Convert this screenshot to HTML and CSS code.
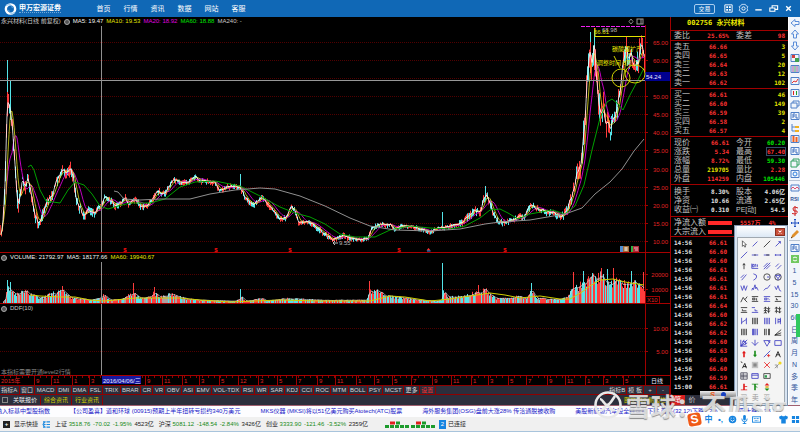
FILE: index.html
```html
<!DOCTYPE html>
<html lang="zh-CN">
<head>
<meta charset="utf-8">
<meta name="viewport" content="width=device-width, initial-scale=1">
<title>永兴材料 002756</title>
<link rel="stylesheet" href="styles.css">
</head>
<body>
<header class="topbar">
  <a class="brand" href="#">
    <svg class="brand-mark" viewBox="0 0 14 14" aria-hidden="true"><circle cx="7" cy="7" r="5" fill="none" stroke="#fff" stroke-width="2.6"/><path d="M2 3Q9 1 9 6M12 11Q5 13 5 8" fill="none" stroke="#6db0e6" stroke-width="1"/></svg>
    <span class="brand-name">申万宏源证券</span>
  </a>
  <nav class="menu"><a href="#">首页</a><a href="#">行情</a><a href="#">资讯</a><a href="#">数据</a><a href="#">网站</a><a href="#">客服</a></nav>
  <div class="window-tools">
    <button class="trade">交易</button>
    <button aria-label="布局"><svg viewBox="0 0 12 12"><path d="M2 2h8v8H2z" fill="none" stroke="#fff"/><path d="M3.500 3.500h2v2h-2zM6.500 3.500h2v2h-2zM3.500 6.500h2v2h-2zM6.500 6.500h2v2h-2z" fill="#fff"/></svg></button>
    <button aria-label="设置"><svg viewBox="0 0 12 12"><path d="M4 1.500h4l.8 1.500 1.900.8-.7 2.200.7 2.200-1.900.8L8 10.500H4L3.200 9l-1.900-.8L2 6l-.7-2.200L3.200 3z" fill="none" stroke="#d8eaff" stroke-width=".9"/><circle cx="6" cy="6" r="1.800" fill="none" stroke="#fff"/></svg></button>
    <button aria-label="最小化"><svg viewBox="0 0 12 12"><path d="M2.500 7.500h7" stroke="#fff" stroke-width="1.500"/></svg></button>
    <button aria-label="还原"><svg viewBox="0 0 12 12"><path d="M4.500 5V3h6v4H8M2 5.500h5.500v3.500H2z" fill="none" stroke="#fff" stroke-width="1.200"/></svg></button>
    <button aria-label="关闭"><svg viewBox="0 0 12 12"><path d="M3.500 3.500l5 5m0-5l-5 5" stroke="#fff" stroke-width="1.500"/></svg></button>
  </div>
</header>

<main class="workspace">
  <div class="charts">
    <section class="panel price-panel">
      <div class="legend">
        <span>永兴材料(日线 前复权)</span><i class="dot"></i><span class="w">MA5: 19.47</span><span class="y">MA10: 19.53</span><span class="m">MA20: 18.92</span><span class="g">MA60: 18.88</span><span>MA240: -</span>
      </div>
      <svg id="price" class="plot" viewBox="0 17 670 236" preserveAspectRatio="xMaxYMid meet" role="img" aria-label="日线价格"></svg>
    </section>
    <section class="panel volume-panel">
      <div class="legend"><i class="dot"></i><span class="w">VOLUME: 21792.97</span><span class="w">MA5: 18177.66</span><span class="y">MA60: 19940.67</span></div>
      <svg id="volume" class="plot" viewBox="0 253 670 51" preserveAspectRatio="xMaxYMid meet" role="img" aria-label="成交量"></svg>
    </section>
    <section class="panel ddf-panel">
      <div class="legend"><i class="dot"></i><span>DDF(10)</span></div>
      <svg id="ddf" class="plot" viewBox="0 304 670 72" preserveAspectRatio="xMaxYMid meet" role="img" aria-label="DDF"></svg>
    </section>
    <svg id="timeline" class="timeline" viewBox="0 376 670 9" preserveAspectRatio="xMaxYMid meet" role="img" aria-label="日期轴"></svg>
    <div class="tabs"><div class="tab-list" id="tabs"></div><button class="push">指标B</button><button>模 板</button><button class="sign">+</button><button class="sign">-</button></div>
    <div class="links">
      <button class="fold" aria-label="收起"></button><a class="on" href="#">关联报价</a><a href="#">综合资讯</a><a href="#">行业资讯</a>
      <span class="links-end">图文F10 侧边栏</span>
    </div>
  </div>

  <aside class="quote">
    <h1>002756 永兴材料</h1>
    <table class="stats ratio"><tr><th>委比</th><td class="r">25.65%</td><th>委差</th><td class="r">98</td></tr></table>
    <table class="book">
      <tr><th>卖五</th><td>66.66</td><td>3</td></tr><tr><th>卖四</th><td>66.65</td><td>5</td></tr><tr><th>卖三</th><td>66.64</td><td>20</td></tr><tr><th>卖二</th><td>66.63</td><td>12</td></tr><tr><th>卖一</th><td>66.62</td><td>102</td></tr>
    </table>
    <table class="book">
      <tr><th>买一</th><td>66.61</td><td>46</td></tr><tr><th>买二</th><td>66.60</td><td>149</td></tr><tr><th>买三</th><td>66.59</td><td>39</td></tr><tr><th>买四</th><td>66.58</td><td>2</td></tr><tr><th>买五</th><td>66.57</td><td>4</td></tr>
    </table>
    <table class="stats">
      <tr><th>现价</th><td class="r">66.61</td><th>今开</th><td class="g">60.20</td></tr>
      <tr><th>涨跌</th><td class="r">5.34</td><th>最高</th><td class="r"><span class="boxed">67.40</span></td></tr>
      <tr><th>涨幅</th><td class="r">8.72%</td><th>最低</th><td class="g">59.30</td></tr>
      <tr><th>总量</th><td class="y">219705</td><th>量比</th><td class="r">2.28</td></tr>
      <tr><th>外盘</th><td class="r">114259</td><th>内盘</th><td class="g">105446</td></tr>
    </table>
    <table class="stats roomy">
      <tr><th>换手</th><td>8.30%</td><th>股本</th><td>4.06亿</td></tr>
      <tr><th>净资</th><td>10.66</td><th>流通</th><td>2.65亿</td></tr>
      <tr><th>收益㈠</th><td>0.310</td><th class="latin">PE[动]</th><td>54.5</td></tr>
    </table>
    <div class="flow">
      <div><span>净流入额</span><i></i><b>5557万</b><b>4%</b></div>
      <div><span>大宗流入</span><i></i></div>
    </div>
    <table class="ticks" id="ticks"></table>
    <div class="quote-tabs"><button class="hot">笔</button><button>价</button></div>
  </aside>

  <div class="side-tools" id="side"></div>

  <div class="palette" role="dialog" aria-label="画线工具">
    <div class="palette-bar"><button aria-label="关闭画线工具"><svg viewBox="0 0 10 8"><path d="M3 2l4 4m0-4L3 6" stroke="#fff" stroke-width="1.400"/></svg></button></div>
    <div class="palette-grid" id="palette"></div>
  </div>
</main>

<div class="ticker">
  <a href="#">纳入标基中型股指数</a><a href="#">【公司盈喜】道和环球 (00915)预期上半年扭转亏损约340万美元</a><a href="#">MKS仪器 (MKSI)将以51亿美元购买Atotech(ATC)股票</a><a href="#">海外服务集团(OSG)盘前大涨28% 传洽通脱被收购</a><a href="#">美股新能源汽车股全线盘前下跌 蔚来(32.12)下跌1.2%</a><a href="#">盛 大跌 1.38</a>
</div>

<footer class="status">
  <button class="plus" aria-label="添加">+</button><span>显示快捷</span>
  <svg class="list-ico" viewBox="0 0 10 8" aria-hidden="true"><path d="M1 1h3M2 4h2M1 7h3M5 1h4M5 4h4M5 7h4M3 1L1 4l2 3" fill="none" stroke="#1d8be0" stroke-width="1.200"/></svg>
  <p>上证 <b>3518.76</b> <b>-70.02</b> <b>-1.95%</b> 4523亿</p>
  <p>沪深 <b>5081.12</b> <b>-148.54</b> <b>-2.84%</b> 3426亿</p>
  <p>创业 <b>3333.90</b> <b>-121.46</b> <b>-3.52%</b> 2359亿</p>
  <svg class="heat" viewBox="0 0 50 8" aria-hidden="true"><path d="M0 6.500h24M26 6.500h24" stroke="#1c9b2c" stroke-width="3" stroke-dasharray="4 1"/><path d="M5 3h5M31 3h5" stroke="#e02020" stroke-width="3"/><path d="M11 3h4M37 3h4" stroke="#1c9b2c" stroke-width="3"/></svg>
  <span class="count">2</span><span>已连接</span>
</footer>

<div class="watermark" aria-hidden="true">
  <svg viewBox="0 0 30 30"><circle cx="15" cy="15" r="12.500" fill="none" stroke="#e9e9e9" stroke-width="2.600"/><path d="M7 9c3 0 4 6 7 6s5-5 8-9M7 21c3 0 4-5 8-6 2 4 4 6 7 5" fill="none" stroke="#e9e9e9" stroke-width="2.600"/></svg>
  <span>雪球：不瓜sig</span>
</div>
<div class="mini-bar"><i>S</i><em></em></div>
<div class="ime">
  <span class="ime-logo">S</span>
  <button>中</button>
  <button aria-label="标点">•,</button>
  <button aria-label="表情"><svg viewBox="0 0 10 10"><circle cx="5" cy="5" r="4.200" fill="#1684e0"/><path d="M2.800 5.500q2.200 3 4.400 0M3 3.500h1M6 3.500h1" fill="none" stroke="#fff"/></svg></button>
  <button aria-label="语音"><svg viewBox="0 0 10 10"><rect x="3.500" y="0" width="3" height="6" rx="1.500" fill="#1684e0"/><path d="M2 4q0 3.500 3 3.500T8 4M5 7.500V10M3 9.500h4" fill="none" stroke="#1684e0"/></svg></button>
  <button aria-label="键盘"><svg viewBox="0 0 10 10"><rect x=".5" y="2" width="9" height="6" fill="none" stroke="#1684e0"/><path d="M2 4h6M3 6.300h4" stroke="#1684e0" stroke-dasharray="1.200 .5"/></svg></button>
  <button class="skin" aria-label="皮肤"><svg viewBox="0 0 10 10"><path d="M0 2l3-1.500q2 2 4 0L10 2 9 5 7.500 4.500V9.500h-5v-5L1 5z" fill="#1684e0"/></svg></button>
  <button aria-label="工具箱"><svg viewBox="0 0 10 10"><path d="M1 1h3.500v3.500H1zM5.500 1H9v3.500H5.500zM1 5.500h3.500V9H1zM5.500 5.500H9V9H5.500z" fill="#1684e0"/></svg></button>
</div>
<script src="app.js"></script>
</body>
</html>
```
FILE: styles.css
```css
* { box-sizing: border-box; }
body {
  margin: 0;
  min-height: 100vh;
  display: flex;
  flex-direction: column;
  background: #000;
  color: #c8c8c8;
  font: 6px/9px "Liberation Sans", "Noto Sans CJK SC", sans-serif;
  overflow: hidden;
  border-bottom: 1px solid #a8c4dc;
}
button { font: inherit; color: inherit; background: none; border: 0; padding: 0; margin: 0; display: grid; place-items: center; }
a { color: inherit; text-decoration: none; white-space: nowrap; }
h1, p { margin: 0; }
svg { display: block; }
table { width: 100%; table-layout: fixed; }
th, td { padding: 0; font-weight: inherit; height: 9px; white-space: nowrap; }

.topbar { height: 17px; display: flex; align-items: center; background: #1068b6; color: #fff; padding: 0 6px 0 4px; }
.brand { width: 86px; display: flex; align-items: center; gap: 2px; }
.brand-mark { width: 13px; height: 14px; }
.brand-name { font-size: 7px; line-height: 8px; font-weight: 700; border-bottom: 1px dotted #6fa9dc; }
.menu { display: flex; font-size: 7px; }
.menu a { width: 27px; text-align: center; }
.window-tools { margin-left: auto; display: flex; align-items: center; gap: 4px; }
.window-tools svg { width: 11px; height: 11px; }
.window-tools .trade { width: 21px; height: 10px; border: 1px solid #a9cdef; border-radius: 2px; font-size: 6px; line-height: 8px; margin-right: 4px; }

.workspace { flex: 1; display: flex; min-height: 0; position: relative; }
.charts { flex: 1; min-width: 0; display: flex; flex-direction: column; }
.panel { position: relative; }
.price-panel { height: 236px; }
.volume-panel { height: 51px; }
.ddf-panel { height: 72px; }
.plot { width: 100%; height: 100%; }
.legend { position: absolute; top: 0; left: 1px; display: flex; align-items: center; gap: 3px; white-space: nowrap; background: #000; }
.dot { width: 6px; height: 6px; border-radius: 50%; background: #555; border: 1px solid #aaa; }
.w { color: #f0f0f0; }
.y { color: #e4e400; }
.m { color: #e000e0; }
.g { color: #00e400; }
.r { color: #ff3232; }
.timeline { width: 100%; height: 9px; }
.plot text, .timeline text { font-size: 6px; fill: #e02424; }
.plot .note { fill: #e0e000; }
.plot .plain { fill: #bbb; }
.plot .bright, .timeline .bright { fill: #e8e8ff; }
.plot .mute { fill: #888; }
.plot .mark { fill: #ff1010; font-weight: 700; }

.tabs { height: 10px; display: flex; background: #2c2e3c; border-top: 1px solid #900000; border-bottom: 1px solid #900000; color: #d8d8d8; }
.tab-list { flex: 0 0 65%; display: flex; }
.tab-list button { flex: 1 0 auto; }
.tabs button { padding: 0 1px; border-right: 1px solid #900000; line-height: 8px; white-space: nowrap; }
.tabs .set { color: #ff3030; }
.tabs .push { margin-left: auto; }
.tabs .sign { width: 13px; }
.links { flex: 1; display: flex; align-items: center; background: #2c2e3c; color: #d0d000; }
.links a { padding: 0 3px; border-right: 1px solid #900000; }
.links .on { color: #eee; }
.fold { width: 6px; height: 6px; margin: 0 2px; border: 1px solid #888; }
.links-end { margin-left: auto; padding-right: 4px; }

.quote { width: 118px; border-left: 1px solid #a00000; display: flex; flex-direction: column; font: 6px/9px "DejaVu Sans Mono", "Noto Sans CJK SC", monospace; }
.quote h1 { font-size: 7px; line-height: 13px; font-weight: 700; color: #e8e800; padding-left: 16px; height: 13px; }
.quote table { border-top: 1px solid #a00000; border-collapse: separate; border-spacing: 0; padding: 1px 0 1px 3px; }
.quote .ratio { padding: 0 0 0 3px; }
.quote .roomy { padding: 2px 0 2px 3px; }
.quote th { text-align: left; font-size: 8px; color: #c0c0c0; font-weight: 400; }
.quote .latin { font-family: "Liberation Sans", "Noto Sans CJK SC", sans-serif; font-size: 7px; }
.quote td { text-align: right; font-weight: 700; color: #e0e0e0; }
.quote td.r { color: #ff3232; }
.quote td.g { color: #00e400; }
.quote td.y { color: #e4e400; }
.stats th { width: 27px; }
.stats th:nth-child(3) { padding-left: 7px; width: 31px; }
.stats td:last-child { padding-right: 3px; }
.boxed { outline: 1px solid #334a66; }
.book th, .ticks th { width: 24px; }
.quote .book td, .quote .ticks td { width: 29px; color: #ff3232; }
.quote .book td:last-child, .quote .ticks td:last-child { width: auto; color: #e4e400; padding-right: 3px; }
.flow { border-top: 1px solid #a00000; padding: 1px 0 0 3px; font-size: 8px; height: 20px; }
.flow div { display: flex; align-items: center; gap: 2px; }
.flow span { width: 32px; white-space: nowrap; }
.flow i { width: 24px; height: 4px; background: #ff2828; }
.flow b { font-size: 6px; color: #ff3232; margin-left: 6px; }
.quote .ticks th { font-size: 6px; font-weight: 700; color: #e0e0e0; }
.quote-tabs { margin-top: auto; height: 10px; display: flex; background: #2c2e3c; font-size: 7px; }
.quote-tabs button { width: 14px; }
.quote-tabs .hot { background: #d82020; color: #fff; }

.side-tools { width: 12px; background: #f1f5fb; display: flex; flex-direction: column; justify-content: space-between; color: #30549a; border-left: 1px solid #fff; position: relative; }
.side-tools button { width: 11px; height: 11px; font-size: 7px; line-height: 11px; }
.side-tools svg { width: 10px; height: 10px; }
.side-tools .word { font-size: 5px; font-weight: 700; }
.side-tools hr { width: 100%; margin: 0; border: 0; border-top: 1px solid #b8c4d4; }
.side-tools::after { content: ""; position: absolute; right: 0; top: 297px; width: 4px; height: 23px; background: #30c860; }

.palette { position: absolute; right: 12px; top: 208px; width: 54px; height: 181px; background: #d8e4f2; border: 1px solid #8094ac; padding: 0 2px 3px; z-index: 1; }
.palette-bar { height: 11px; display: flex; justify-content: flex-end; align-items: center; background: linear-gradient(#fff, #dce8f5); }
.palette-bar button { width: 10px; height: 8px; background: #c9503a; border: 1px solid #8a3020; }
.palette-bar svg { width: 8px; height: 6px; }
.palette-grid { display: grid; grid-template-columns: repeat(4, 1fr); background: #f4f4f4; border: 1px solid #a0a8b0; }
.palette-grid button { height: 11px; font-size: 7px; line-height: 11px; color: #999; }
.palette-grid svg { width: 8px; height: 8px; }

.ticker { height: 12px; display: flex; gap: 20px; align-items: center; background: #fdfdff; color: #2020c8; overflow: hidden; border-top: 1px solid #a06070; }
.ticker a:first-child { margin-left: -4px; }
.status { height: 14px; display: flex; align-items: center; gap: 4px; padding-left: 3px; background: #f0f0f0; color: #222; white-space: nowrap; }
.status b { font-weight: 400; color: #168a16; margin-right: 1px; }
.status p { padding-right: 1px; }
.plus { width: 7px; height: 7px; background: #222; color: #fff; font-weight: 700; line-height: 7px; }
.list-ico { width: 9px; height: 7px; }
.heat { width: 50px; height: 8px; margin-left: 12px; }
.count { background: #1684e0; color: #fff; width: 7px; text-align: center; margin-right: -2px; }

.watermark { position: absolute; left: 593px; top: 390px; display: flex; align-items: center; gap: 3px; font: 700 25px/30px "Noto Sans CJK SC", sans-serif; color: rgba(235, 235, 235, .85); text-shadow: 0 1px 1px rgba(90, 90, 90, .7); white-space: nowrap; z-index: 2; }
.watermark svg { width: 30px; height: 30px; }
.mini-bar { position: absolute; left: 700px; top: 391px; width: 36px; height: 7px; background: linear-gradient(#eee, #777); display: flex; justify-content: center; align-items: center; gap: 6px; z-index: 1; }
.mini-bar i { color: #f05a18; font-size: 8px; font-weight: 700; }
.mini-bar em { width: 5px; height: 5px; border-radius: 50%; background: #1840c0; }
.ime { position: absolute; left: 688px; right: 0; top: 412px; height: 15px; display: flex; align-items: center; gap: 3px; background: #fff; color: #1684e0; font-weight: 700; z-index: 4; }
.ime button { width: 9px; font-size: 8px; }
.ime svg { width: 9px; height: 9px; }
.ime-logo { width: 13px; height: 13px; border-radius: 3px; background: #f05a18; color: #fff; font-size: 12px; line-height: 13px; text-align: center; transform: rotate(-10deg); }
.ime .skin { margin-left: auto; }
```
FILE: app.js
```js
let seed = 7;
const rnd = () => (seed = (seed * 16807) % 2147483647) / 2147483647;
const at = (pts, x) => {
  for (let i = 1; i < pts.length; i++) {
    if (x <= pts[i][0]) {
      const [a, b] = [pts[i - 1], pts[i]];
      return a[1] + (b[1] - a[1]) * (x - a[0]) / (b[0] - a[0]);
    }
  }
  return pts[pts.length - 1][1];
};
const pairs = s => s.trim().split(/\s+/).map(p => p.split(',').map(Number));
const poly = (pts, color, w = 1) => `<polyline points="${pts.map(p => p[0].toFixed(1) + ',' + p[1].toFixed(1)).join(' ')}" fill="none" stroke="${color}" stroke-width="${w}" stroke-linejoin="round"/>`;
const line = (x1, y1, x2, y2, c, extra = '') => `<path d="M${x1} ${y1}L${x2} ${y2}" stroke="${c}" ${extra}/>`;
const text = (x, y, s, cls = '', anchor = 'start') => `<text x="${x}" y="${y}" class="${cls}" text-anchor="${anchor}">${s}</text>`;
const grid = y => line(0, y, 645, y, '#500000', 'stroke-dasharray="1 1"') + line(645, y, 648, y, '#a00000');
const axis = (a, b) => line(645.5, a, 645.5, b, '#a00000') + line(101.5, a, 101.5, b, '#909090');
const base = y => line(0, y, 670, y, '#a80000');
const RED = '#ff3c3c', CYAN = '#54e4e8';

const close = pairs(`1,236 3,212 5,170 6,120 7,98 8,95 10,110 12,125 14,155 16,190 18,203 22,180 25,185 28,178 31,195 34,215 38,222 42,216 45,205 49,198 53,192 56,180 60,173 63,170 67,172 70,168 73,178 76,200 80,208 83,215 88,210 94,212 98,208 101,206 104,196 108,199 115,205 120,203 125,197 128,205 135,199 140,206 148,205 153,198 157,191 164,194 170,184 174,179 180,183 187,182 195,177 200,181 208,181 214,182 219,190 228,187 235,186 240,188 246,199 253,205 262,197 268,205 275,213 280,219 286,217 291,206 295,211 298,222 307,221 315,226 323,233 332,240 342,235 350,238 360,240 368,238 371,228 380,224 390,224 394,230 400,226 410,226 420,229 430,232 436,228 445,227 455,225 462,222 468,216 474,211 480,212 483,200 486,195 490,203 494,216 499,223 510,221 519,216 524,217 528,208 531,204 536,209 545,211 555,213 560,218 567,211 570,200 574,188 576,172 580,165 583,140 586,95 588,60 590,50 592,65 594,42 596,75 598,100 600,118 603,105 606,122 610,128 614,118 617,105 620,90 622,65 626,45 628,62 631,52 634,70 638,62 641,48 644,60`);
const amp = pairs('1,4 6,22 14,16 22,8 40,6 70,7 100,4 200,3 330,3 440,2 475,5 490,5 510,3 560,4 575,9 588,22 600,16 615,13 645,16');
const series = [];
let bars = '';
for (let x = 1; x < 645; x++) {
  const a = at(amp, x);
  const y = at(close, x) + (rnd() - .5) * a * .7;
  const up = rnd() > .48;
  const top = Math.max(30, y - rnd() * a * .9);
  const bot = y + rnd() * a * .9 + 1;
  bars += line(x + .5, top.toFixed(1), x + .5, bot.toFixed(1), up ? RED : CYAN, 'stroke-width="1"');
  series.push([x, y]);
}
const ma = (n) => series.map((p, i) => {
  const s = series.slice(Math.max(0, i - n + 1), i + 1);
  return [p[0], s.reduce((t, q) => t + q[1], 0) / s.length];
});
const ma60 = pairs('28,167 31,165 34,170 40,190 46,201 60,203 68,190 75,182 84,185 92,194 100,206 108,209 118,206 130,203 150,203 165,199 180,187 195,182 215,181 240,186 260,196 280,207 295,213 310,217 325,224 340,234 355,237 375,237 390,230 410,226 430,228 450,229 465,226 480,218 490,210 500,209 508,213 518,219 530,214 552,210 565,214 575,206 584,185 592,150 600,118 607,102 612,99 618,104 623,110 630,95 638,80 644,68');
const ma240 = pairs('114,191 118,192 124,199 140,200 160,199 190,199 210,194 235,190 260,188 275,189 300,196 325,206 350,218 370,226 395,230 430,231 460,229 485,224 500,222 530,220 565,214 582,208 595,194 610,182 622,169 634,151 644,139');

let p = '';
for (let v = 65, y = 41.5; v >= 10; v -= 5, y += 18.15) {
  p += grid(Math.round(y) + .5);
  if (v !== 55) p += text(668, Math.round(y) + 2.5, v.toFixed(2), '', 'end');
}
p += line(7.5, 60, 7.5, 100, CYAN) + line(10.5, 80, 10.5, 120, CYAN) + line(240.5, 174, 240.5, 190, CYAN) + line(442.5, 212, 442.5, 226, CYAN) + line(485.5, 186, 485.5, 200, CYAN) + line(590.5, 32, 590.5, 70, CYAN) + line(594.5, 28, 594.5, 70, RED);
p += line(0.5, 225, .5, 235, '#d02020');
p += bars + poly(ma(12).slice(5), '#c000c0', 1) + poly(ma(6), '#e0e020', .8) + poly(ma(2), '#fff', .8) + poly(ma60, '#00a000') + poly(ma240, '#909090');
p += axis(25, 253) + line(0, 80.5, 645, 80.5, '#989898') + base(252.5);
p += '<rect x="645" y="72" width="25" height="9" fill="#000090"/>' + text(646, 79, '54.24', 'bright');
p += '<path d="M581 26.500h64" stroke="#f020f0" stroke-dasharray="4 1"/>' + line(595, 36.500, 645, 36.500, '#e0e000') + line(595, 28, 595, 37, '#e0e000');
p += text(602, 32, '68.98', 'plain') + text(594, 34, '66.61', 'note');
p += text(612, 51, '碳酸锂扩产', 'note') + text(597, 65, '调整时间 8周', 'note');
p += '<g fill="none" stroke="#d0d000"><ellipse cx="621" cy="78" rx="9" ry="9"/><ellipse cx="635" cy="74" rx="10" ry="9"/><path d="M614 56l6 12"/></g>';
p += text(339, 245, '9.55', 'plain') + '<path d="M333 243h5M333 243l2-2m-2 2l2 2" fill="none" stroke="#bbb"/>';
p += '<path d="M631 19l2 2.500-2 2.500-2-2.500z" fill="none" stroke="#888"/><rect x="637" y="19" width="6" height="5" fill="none" stroke="#999"/><path d="M641 19v5" stroke="#999"/>';
[125, 216, 290, 399, 505].forEach(x => { p += text(x, 252, '$', 'mark', 'middle'); });
p += '<path d="M428.500 248l2 2.500h-4z" fill="#f33"/><path d="M427 251h3.500" stroke="#2090f0"/>';
p += '<rect x="620" y="246" width="9" height="6" fill="#a06a38"/><rect x="620" y="246" width="3" height="6" fill="#508cd0"/><rect x="631" y="246" width="8" height="6" fill="#b02838"/><rect x="631" y="246" width="2" height="6" fill="#30b040"/><path d="M624 248h4m-4 2h4m-2-3v4M634 248h4m-3 2h3" stroke="#fff" stroke-width=".7"/>';
document.getElementById('price').innerHTML = p;

const vol = pairs('3,0 5,3 7,18 10,12 18,9 24,12 30,9 40,4 50,9 55,11 62,12 70,5 90,2 100,5 103,8 110,2 120,3 133,11 140,5 150,5 154,11 160,6 172,9 185,4 200,2 235,1 239,3 241,7 245,1 262,4 266,1 287,4 325,2 366,2 369,14 376,13 385,7 400,5 420,2 436,1 441,2 443,14 447,5 465,7 480,12 486,13 495,4 510,4 518,7 526,5 531,13 536,4 560,3 567,6 572,16 578,18 590,26 600,28 612,24 624,20 634,21 644,18');
let v = grid(274.5) + grid(289.5) + text(668, 277, '20000', '', 'end') + text(668, 292, '10000', '', 'end');
const vs = [];
for (let x = 3; x < 645; x++) {
  const h = at(vol, x) * (.6 + rnd() * .5) + 1;
  const k = rnd();
  v += line(x + .5, 303, x + .5, (303 - h).toFixed(1), k < .4 ? RED : k < .8 ? CYAN : '#b0a0a0');
  vs.push([x, 303 - h]);
}
const spikes = [[7, 23, CYAN], [10, 21, CYAN], [62, 17, RED], [133, 20, RED], [154, 16, RED], [240, 14, CYAN], [369, 22, RED], [442, 40, CYAN], [478, 18, RED], [531, 20, CYAN], [573, 31, RED], [583, 32, CYAN], [601, 35, RED], [607, 34, CYAN], [613, 35, RED], [631, 32, CYAN], [643, 31, RED]];
spikes.forEach(s => { v += line(s[0] + .5, 303, s[0] + .5, 303 - s[1], s[2]); });
v += poly(vs.map((q, i) => [q[0], vs.slice(Math.max(0, i - 3), i + 1).reduce((t, r) => t + r[1], 0) / Math.min(4, i + 1)]), '#d8d8d8', .7);
v += poly(pairs('30,295 40,296 60,297 75,297 90,300 105,301 135,298 150,298 180,298 200,300 230,302 280,300 320,301 370,301 390,296 405,297 430,301 450,299 470,296 490,293 505,295 520,298 540,296 560,299 570,299 582,292 590,286 600,280 613,279 625,282 644,285'), '#d0d000');
v += axis(253, 304) + base(303.5) + '<rect x="645.500" y="296.500" width="14" height="7" fill="none" stroke="#a00000"/>' + text(647, 302, 'X10');
document.getElementById('volume').innerHTML = v;

document.getElementById('ddf').innerHTML = grid(328.5) + grid(351.5) + text(668, 331, '10.00', '', 'end') + text(668, 354, '5.00', '', 'end') + axis(304, 376) + base(375.5) + text(1, 374, '本指标需要开通level2行情', 'mute');

let t = text(1, 383, '2015年') + line(645.5, 376, 645.5, 385, '#a00000') + text(651, 383, '日线', 'bright');
'9,36 11,53 1,74 3,91 9,147 11,164 1,184 3,201 5,221 12,240 3,260 5,279 7,298 9,319 11,337 1,358 3,376 5,394 7,413 9,434 11,453 1,473 3,490 5,510 7,528 9,549 11,567 1,587 3,605 5,625'.split(' ').forEach(s => {
  const [m, x] = s.split(',');
  t += text(+x, 383, m) + line(x - 1.5, 376, x - 1.5, 385, '#a00000');
});
for (let x = 4; x < 645; x += 6) t += line(x + .5, 376, x + .5, 378, '#900000');
t += '<rect x="102" y="376" width="39" height="8" fill="#1818a0"/>' + text(103, 382.5, '2016/04/06/三', 'bright');
document.getElementById('timeline').innerHTML = t;

document.getElementById('tabs').innerHTML = '指标A 窗口 MACD DMI DMA FSL TRIX BRAR CR VR OBV ASI EMV VOL-TDX RSI WR SAR KDJ CCI ROC MTM BOLL PSY MCST 更多 设置'.split(' ')
  .map(s => `<button class="${s === '设置' ? 'set' : ''}">${s}</button>`).join('');

document.getElementById('ticks').innerHTML = '61 60 60 61 61 61 61 64 60 62 62 60 63 60 60 59 61'.split(' ')
  .map((s, i) => `<tr><th>${i === 16 ? '15:00' : i === 15 ? '14:57' : '14:56'}</th><td>66.${s}</td><td></td></tr>`).join('');

const stroke = (d, c = '#3838c0') => `<path d="${d}" fill="none" stroke="${c}"/>`;
const svg = s => `<svg viewBox="0 0 10 10">${s}</svg>`;
const page = stroke('M1 1.500h8v7H1z', '#5080c8');
const side = [
  stroke('M9 3.500H5V1.500L1 5l4 3.500V6.500h4z', '#5a8cd8'), stroke('M3.500 9V5H1.500L5 1l3.500 4H6.500v4z', '#5a8cd8'), stroke('M3.500 1v4H1.500L5 9l3.500-4H6.500V1z', '#5a8cd8'),
  page + '<path d="M2 2h3v3H2z" fill="#d04040"/><path d="M5 5h4v4H5z" fill="#40a050"/>', page + stroke('M3 2v6M7 2v6', '#a050a0') + stroke('M5 2v6', '#40a060'),
  page + stroke('M2 7l2-2 2 1 2-3', '#e03030'), page + stroke('M3.500 3v4', '#e02020') + stroke('M6.500 3v4', '#20a030'), stroke('M1 4h6v5H1zM3 4V2h6v5H7', '#5080c8'),
  page + stroke('M3 7V3h2M3 5h2M6 3v4h2', '#4070c0'), stroke('M2 1v7h3M2 4h3', '#5080c8') + '<path d="M5 3h4v2H5zM5 7h4v2H5z" fill="#f0b020"/>', page + '<path d="M2.500 2h2v6h-2zM5.500 3h2v5h-2z" fill="#f06020"/>',
  page + stroke('M3 7V3h2M3 5h2M6 3v4h2', '#4070c0'), stroke('M1 3h6v6H1zM3 3V1h6v6H7', '#30a060'), page + '<circle cx="5" cy="5" r="2" fill="none" stroke="#3080e0"/>',
  null, stroke('M1 2h8v6H1z', '#5080c8') + stroke('M1 6l2-2 2 2 2-2 2 2', '#e05070'), 'RSI', stroke('M8 2Q3 0 3 3t4 2q1 4-5 2.500M5 0v10', '#d02020'), stroke('M5 1v8M1 5h8M4 2l1-1 1 1M4 8l1 1 1-1M2 4L1 5l1 1M8 4l1 1-1 1', '#2050c0'), '<path d="M1 9l1-3 5-5 2 2-5 5z" fill="#e0902c"/>' + stroke('M1 9l1.500-1', '#503010'),
  null, page + stroke('M3 7V3h2M3 5h2M6 3v4h2', '#4070c0'), '<path d="M1 1h8v8H1z" fill="#70c860"/>' + stroke('M3 4q2-2 4 0M7 6q-2 2-4 0', '#fff'),
  '1', '5', '15', '30', '60', '日', '周', '月', 'N', '多', '季', '年'
];
document.getElementById('side').innerHTML = side.map(s => s === null ? '<hr>' : s[0] === '<' ? `<button aria-label="工具">${svg(s)}</button>` : `<button class="${s.length > 2 ? 'word' : ''}">${s}</button>`).join('');

const K = '#222';
const bars4 = c => stroke('M2 1v8M4 1v8M6 1v8M8 1v8', c);
const icons = [
  '<path d="M3 1v7l1.500-1.500L6 9l1-.5L6 6h2z" fill="#fff" stroke="#222" stroke-width=".8"/>', stroke('M2 8l6-6'), stroke('M1 9l8-8', K), stroke('M2 8l6-6M5.500 2H8v2.500'),
  stroke('M1 9l8-8'), stroke('M1 5h8') + stroke('M4 5h2', K), stroke('M1 5h7') + stroke('M4 5h4', K), stroke('M1 5h8M2 4v2M8 4v2'),
  stroke('M5 9V2M3.500 4L5 2l1.500 2', K), stroke('M1 2v6h8M2 3h2v3H2zM5 3h1v3M8 3v3'), stroke('M1 6l5-5M4 9l5-5M1 9l8-8'), stroke('M2 6l4-4M4 9l5-5'),
  stroke('M1 6l4-4M2 9l6-7'), stroke('M3 1q5 1 4 4T3 9'), '<circle cx="5" cy="5" r="4" fill="none" stroke="#333"/>' + stroke('M5 5h3'), '<circle cx="5" cy="5" r="4" fill="none" stroke="#223" />' + stroke('M2 3h6L5 7zM5 7v2'),
  stroke('M1 2l2 6 2-6 2 6 2-6'), stroke('M1 8l1-3 1 2 2-6 1 5 1-2 2 4'), stroke('M1 8l3-3 1 1 4-5'), stroke('M1 3l2 4 2-5 2 6 2 1'),
  stroke('M1 9l3-6 2 3 3-4M6 6l3 3', K), stroke('M1 2h8M1 8h8M2 4h3v2H2zM7 4v3', K), stroke('M1 2h8M1 8h8M2 4h3v2H2zM6 4l2 2'), stroke('M1 2h8M1 8h8M3 4v2h2', K),
  stroke('M1 2h8M1 8h8M3 4v2h5', K), stroke('M1 2h4M1 8h8M5 4v2h3'), stroke('M1 3q2-2 4 0t4 0M1 6q2-2 4 0t4 0M1 9q2-2 4 0M3 1v8M7 1v8', K), stroke('M1 3q2-2 4 0t4 0M1 7q2-2 4 0t4 0M3 1v8M7 1v8', K),
  stroke('M2 1v8M8 1v8M2 7l6-4'), bars4(K), bars4('#3838c0'), stroke('M2 1v8M5 2v6M8 1v8M5 3h3v3H5'),
  bars4(K), stroke('M2 1v8M3 1v8M4 1v8M6 1v8M8 1v8'), stroke('M2 1v8M4 1v8M7 1v8M8 1v8', K), stroke('M1 9l8-7M1 9l8-3M1 9h8', K),
  stroke('M1 1v8h8M1 9l8-8M1 9l4-8M1 9l8-4M3 3h4v4'), stroke('M5 1v7M1 4l4 4 4-4'), stroke('M1 2h8L5 9zM6 2l3 3'), stroke('M1 2h8v6H1z'),
  '<path d="M5 1l2.500 3H6v5H4V4H2.500z" fill="#e01818"/>', '<path d="M5 9l2.500-3H6V1H4v5H2.500z" fill="#188a18"/>', stroke('M1 9l8-8') + stroke('M5 7h4M7 5v4', '#e02020'), stroke('M2 9l3-7 3 7M3 6h4', '#000'),
  stroke('M3 9l3-6 2 6M4 7h4M1 1l2 1', '#000'), '<path d="M1 1h8v8H1z" fill="#c4c4c4"/><path d="M3 3h4v4H3z" fill="#888"/>', stroke('M1.500 1.500l7 7m0-7l-7 7', '#e81818'), stroke('M1 9l5-5M1 5h3v4', '#888') + '<circle cx="7.500" cy="2.500" r="2" fill="#f0d820"/>',
  stroke('M1 1h8v8H1zM4 1v8M1 4h8M1 6h8', '#445'), stroke('M1 2h8v6H1zM1 4h8'), stroke('M1 2h8v6H1z', '#333') + '<path d="M2 4h3v3H2z" fill="#30a050"/>', '',
  '<path d="M4 1h2v3h3v1H6v3h3v1H1V8h3z" fill="#e01818"/>', '<path d="M1 1h8v1H6v2l2 1v1L6 5v4H4V2H1z" fill="#188a18"/>', '<path d="M5 0l3 3H2z" fill="#e02020"/><path d="M3 4h4v2H3z" fill="#e0b020"/><path d="M2 7h6L5 10z" fill="#188a18"/>', '',
  '买', '卖', '平'
];
document.getElementById('palette').innerHTML = icons.map(s => s === '' ? '<span></span>' : s[0] === '<' ? `<button aria-label="画线">${svg(s)}</button>` : `<button>${s}</button>`).join('');
```
